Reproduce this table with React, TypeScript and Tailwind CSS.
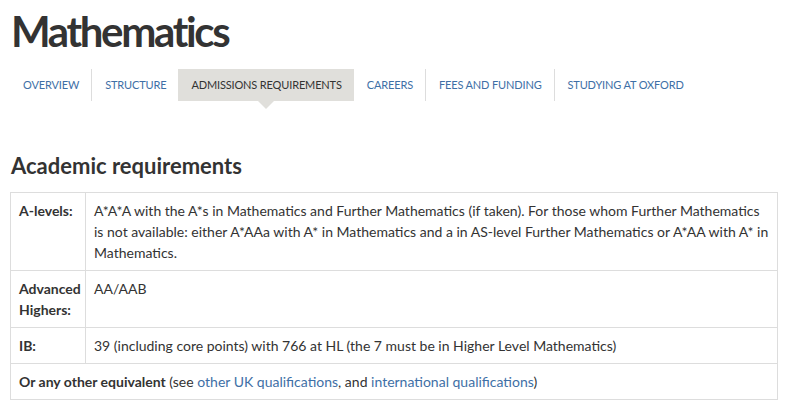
import { Fragment } from 'react';

const navItems = [
  'Overview',
  'Structure',
  'Admissions requirements',
  'Careers',
  'Fees and funding',
  'Studying at Oxford'
];
const activeIndex = 2;

const font = "font-['Lato','Liberation_Sans',sans-serif]";

export default function App() {
  return (
    <div className={`${font} bg-white text-[#333] w-[789px] h-[408px] overflow-hidden px-[10px]`}>
      {/* 제목 */}
      <h1 className="text-[42px] leading-none font-bold text-[#333] pt-[10px] pl-[1px] tracking-[-2.35px]">
        Mathematics
      </h1>

      {/* 탭 메뉴 */}
      <ul className="flex mt-[17px] h-[32px]">
        {navItems.map((item, i) => {
          const isActive = i === activeIndex;
          const showSep = i > 0 && i !== activeIndex && i !== activeIndex + 1;
          return (
            <Fragment key={item}>
              {showSep && <li className="w-px bg-[#dddddd] self-stretch" />}
              <li
                className={`relative flex items-center pl-[13px] pr-[12px] text-[11px] uppercase tracking-[-0.15px] ${
                  isActive ? 'bg-[#e0dfdb] text-[#333]' : 'text-[#3e6fa6]'
                }`}
              >
                {item}
                {isActive && (
                  <span className="absolute left-1/2 -translate-x-1/2 top-full w-0 h-0 border-l-[8px] border-r-[8px] border-t-[8px] border-l-transparent border-r-transparent border-t-[#e0dfdb]" />
                )}
              </li>
            </Fragment>
          );
        })}
      </ul>

      {/* 학업 요건 */}
      <h2 className="text-[22px] font-bold text-[#333] mt-[51px] pl-[1px] leading-[28px]">
        Academic requirements
      </h2>

      <table className="mt-[12px] w-[768px] table-fixed border-collapse text-[14px] leading-[21px]">
        <colgroup>
          <col className="w-[75px]" />
          <col />
        </colgroup>
        <tbody>
          <tr>
            <th className="border border-[#dddddd] px-[8px] py-[7px] text-left align-top font-bold">
              A-levels:
            </th>
            <td className="border border-[#dddddd] px-[8px] py-[7px] align-top">
              A*A*A with the A*s in Mathematics and Further Mathematics (if taken). For those whom Further
              Mathematics
              <br />
              is not available: either A*AAa with A* in Mathematics and a in AS-level Further Mathematics or
              A*AA with A* in
              <br />
              Mathematics.
            </td>
          </tr>
          <tr>
            <th className="border border-[#dddddd] px-[8px] py-[7px] text-left align-top font-bold">
              Advanced Highers:
            </th>
            <td className="border border-[#dddddd] px-[8px] py-[7px] align-top">AA/AAB</td>
          </tr>
          <tr>
            <th className="border border-[#dddddd] px-[8px] py-[7px] text-left align-top font-bold">IB:</th>
            <td className="border border-[#dddddd] px-[8px] py-[7px] align-top">
              39 (including core points) with 766 at HL (the 7 must be in Higher Level Mathematics)
            </td>
          </tr>
          <tr>
            <td colSpan={2} className="border border-[#dddddd] px-[8px] py-[7px] align-top">
              <strong className="font-bold">Or any other equivalent</strong> (see{' '}
              <a className="text-[#3e6fa6]">other UK qualifications</a>, and{' '}
              <a className="text-[#3e6fa6]">international qualifications</a>)
            </td>
          </tr>
        </tbody>
      </table>
    </div>
  );
}
